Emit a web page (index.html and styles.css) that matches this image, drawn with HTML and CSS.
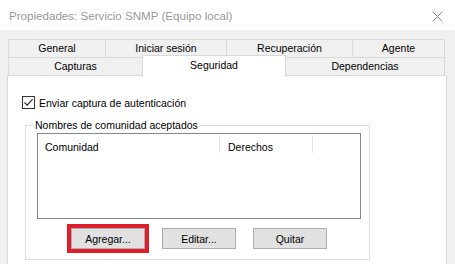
FILE: index.html
```html
<!DOCTYPE html>
<html lang="es">
<head>
    <meta charset="UTF-8">
    <title>Propiedades: Servicio SNMP (Equipo local)</title>
    <link rel="stylesheet" href="styles.css">
</head>
<body>
    <div class="titlebar">
        <span class="title">Propiedades: Servicio SNMP (Equipo local)</span>
        <svg class="close" width="11" height="11" viewBox="0 0 11 11">
            <path d="M0.5 0.5 L10.5 10.5 M10.5 0.5 L0.5 10.5" stroke="#8a8a8a" stroke-width="1" fill="none"/>
        </svg>
    </div>

    <div class="dialog">
        <div class="tabs">
            <div class="tab-row">
                <div class="tab t-general">General</div>
                <div class="tab t-sesion">Iniciar sesión</div>
                <div class="tab t-recup">Recuperación</div>
                <div class="tab t-agente">Agente</div>
            </div>
            <div class="tab-row">
                <div class="tab t-capturas">Capturas</div>
                <div class="tab t-seguridad active">Seguridad</div>
                <div class="tab t-depend">Dependencias</div>
            </div>
        </div>

        <div class="panel">
            <label class="check-row">
                <span class="checkbox">
                    <svg width="11" height="11" viewBox="0 0 11 11">
                        <path d="M1.5 5.5 L4.2 8.2 L9.6 2.2" stroke="#222" stroke-width="1.1" fill="none"/>
                    </svg>
                </span>
                Enviar captura de autenticación
            </label>

            <fieldset class="group">
                <legend>Nombres de comunidad aceptados</legend>
                <div class="listview">
                    <div class="list-header">
                        <div class="col col-name">Comunidad</div>
                        <div class="col col-rights">Derechos</div>
                    </div>
                </div>
                <div class="buttons">
                    <button class="btn marked">Agregar...</button>
                    <button class="btn">Editar...</button>
                    <button class="btn">Quitar</button>
                </div>
            </fieldset>
        </div>
    </div>
</body>
</html>
```

FILE: styles.css
```css
* {
    margin: 0;
    padding: 0;
    box-sizing: border-box;
    font-family: "Liberation Sans", Arial, sans-serif;
}

body {
    background-color: #f0f0f0;
    color: #000;
    font-size: 10.5px;
    width: 455px;
    height: 264px;
    overflow: hidden;
}

.titlebar {
    height: 30px;
    background-color: #fff;
    display: flex;
    align-items: center;
    justify-content: space-between;
    padding: 0 12px 0 9px;
}

.title {
    color: #999;
    font-size: 11.6px;
}

.close {
    margin-top: 2px;
}

.dialog {
    padding-top: 9px;
}

.tab-row {
    display: flex;
    align-items: flex-start;
    height: 19px;
    margin-left: 8px;
}

.tab-row + .tab-row {
    margin-top: -1px;
}

.tab {
    height: 19px;
    line-height: 17px;
    text-align: center;
    border: 1px solid #d9d9d9;
    background-color: #f0f0f0;
    margin-left: -1px;
}

.tab:first-child {
    margin-left: 0;
}

.t-general { width: 98px; }
.t-sesion { width: 122px; }
.t-recup { width: 127px; }
.t-agente { width: 93px; }

.t-capturas { width: 135px; }
.t-seguridad { width: 144px; }
.t-depend { width: 160px; }

.tab.active {
    position: relative;
    z-index: 1;
    height: 22px;
    margin-top: -2px;
    line-height: 18px;
    background-color: #fff;
    border-bottom: none;
}

.panel {
    margin-top: -1px;
    margin-left: 7px;
    width: 440px;
    height: 200px;
    background-color: #fff;
    border: 1px solid #d9d9d9;
    padding: 20px 0 0 14px;
}

.check-row {
    display: flex;
    align-items: center;
    gap: 4px;
    height: 13px;
}

.checkbox {
    width: 13px;
    height: 13px;
    border: 1px solid #333;
    background-color: #fff;
    display: flex;
    align-items: center;
    justify-content: center;
}

.group {
    margin: 10px 0 0 3px;
    width: 345px;
    border: 1px solid #dcdcdc;
    padding: 0 8px 10px 11px;
}

.group legend {
    margin-left: -4px;
    padding: 0 2px;
    line-height: 12px;
}

.listview {
    margin-top: 2px;
    width: 324px;
    height: 86px;
    border: 1px solid #828790;
    background-color: #fff;
}

.list-header {
    display: flex;
    height: 18px;
    margin-top: 1px;
}

.col {
    height: 18px;
    padding: 5px 0 0 7px;
    line-height: 14px;
    border-right: 1px solid #e5e5e5;
}

.col-name { width: 182px; }
.col-rights { width: 93px; padding-left: 8px; }

.buttons {
    display: flex;
    gap: 17px;
    padding-left: 34px;
    margin-top: 9px;
}

.btn {
    width: 74px;
    height: 21px;
    background-color: #e1e1e1;
    border: 1px solid #adadad;
    font-size: 10.5px;
    color: #000;
}

.btn.marked {
    outline: 4px solid #dc1f2b;
}
```
